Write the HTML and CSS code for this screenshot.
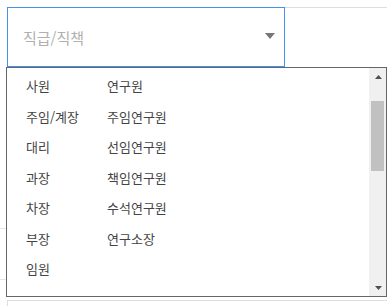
FILE: index.html
```html
<!DOCTYPE html>
<html lang="ko">
<head>
    <meta charset="UTF-8">
    <meta name="viewport" content="width=device-width, initial-scale=1.0">
    <title>직급/직책 선택</title>
    <link rel="stylesheet" href="styles.css">
</head>
<body>
    <div class="form">
        <div class="row top-row">
            <div class="select-box">
                <span class="placeholder">직급/직책</span>
                <svg class="caret" width="10" height="6" viewBox="0 0 10 6"><polygon points="0,0 10,0 5,6" fill="#777"/></svg>
            </div>
            <div class="side-field"></div>
        </div>
        <div class="row plain-row first"></div>
        <div class="row plain-row"></div>
        <div class="row input-row">
            <div class="input-box"></div>
        </div>

        <div class="dropdown">
            <div class="options">
                <ul class="col">
                    <li>사원</li>
                    <li>주임/계장</li>
                    <li>대리</li>
                    <li>과장</li>
                    <li>차장</li>
                    <li>부장</li>
                    <li>임원</li>
                </ul>
                <ul class="col">
                    <li>연구원</li>
                    <li>주임연구원</li>
                    <li>선임연구원</li>
                    <li>책임연구원</li>
                    <li>수석연구원</li>
                    <li>연구소장</li>
                </ul>
            </div>
            <div class="scrollbar">
                <div class="sb-btn"><svg width="7" height="4" viewBox="0 0 7 4"><polygon points="0,4 7,4 3.5,0" fill="#505050"/></svg></div>
                <div class="sb-track"><div class="sb-thumb"></div></div>
                <div class="sb-btn"><svg width="7" height="4" viewBox="0 0 7 4"><polygon points="0,0 7,0 3.5,4" fill="#505050"/></svg></div>
            </div>
        </div>
    </div>
</body>
</html>
```

FILE: styles.css
```css
body {
    margin: 0;
    background-color: #fff;
    font-family: "Noto Sans CJK KR", "Noto Sans", sans-serif;
    overflow: hidden;
}
.form {
    position: relative;
    height: 306px;
    overflow: hidden;
}
.top-row {
    display: flex;
    padding-top: 7px;
}
.select-box {
    box-sizing: border-box;
    width: 278px;
    height: 60px;
    margin-left: 7px;
    border: 1px solid #3f94ef;
    display: flex;
    align-items: center;
    justify-content: space-between;
    padding: 0 9px 0 15px;
}
.placeholder {
    font-size: 15px;
    color: #b0b0b0;
    margin-top: 1px;
}
.caret {
    display: block;
    margin-top: -3px;
}
.side-field {
    flex: 1;
    border-top: 1px solid #dedede;
}
.plain-row {
    height: 50px;
    border-bottom: 1px solid #e6e6e6;
}
.plain-row.first {
    height: 161px;
}
.input-row {
    padding: 20px 0 0 7px;
}
.input-box {
    height: 5px;
    border-top: 1px solid #dedede;
    border-left: 1px solid #dedede;
}
.dropdown {
    position: absolute;
    left: 6px;
    top: 67px;
    width: 381px;
    height: 230px;
    box-sizing: border-box;
    border: 1px solid #666;
    background-color: #fff;
    display: flex;
}
.options {
    flex: 1;
    display: flex;
    padding: 3px 0 0 19px;
}
.col {
    list-style: none;
    margin: 0;
    padding: 0;
    width: 81px;
}
.col li {
    height: 30.5px;
    line-height: 30.5px;
    font-size: 13px;
    color: #444;
    white-space: nowrap;
}
.scrollbar {
    width: 17px;
    background-color: #f0f0f0;
    display: flex;
    flex-direction: column;
}
.sb-btn {
    height: 17px;
    display: flex;
    align-items: center;
    justify-content: center;
}
.sb-btn svg {
    display: block;
    margin-left: 1px;
}
.sb-track {
    flex: 1;
    padding-top: 16px;
}
.sb-thumb {
    width: 13px;
    height: 70px;
    margin-left: 2px;
    background-color: #c1c1c1;
}
```
